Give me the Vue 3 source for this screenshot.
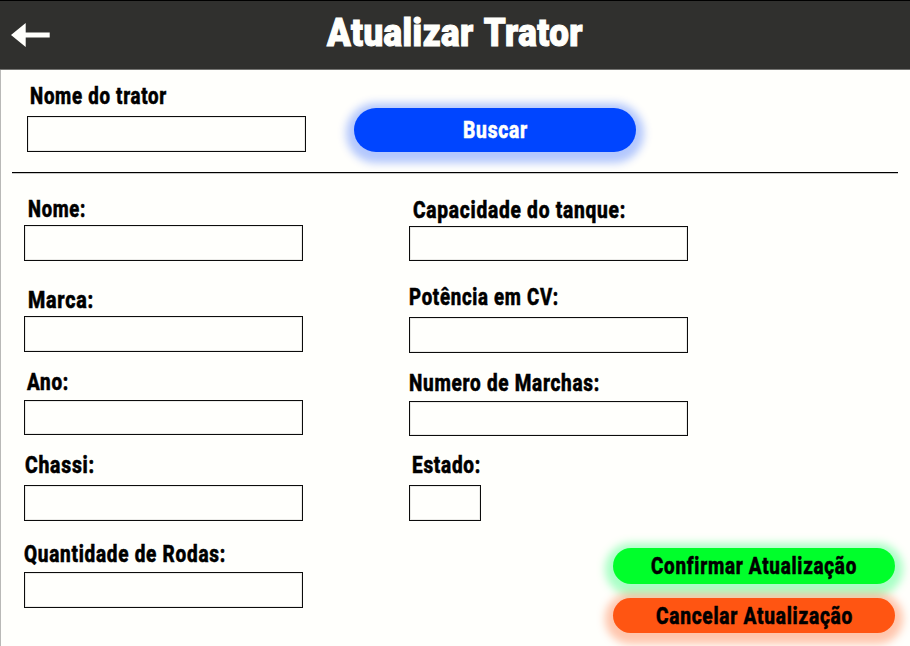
<script setup>
import { h } from 'vue'

// Text set to a fixed measure: condensed or stretched to `w` pixels.
const FitText = (props) =>
  h('svg', { class: 'fit', width: props.w, height: 26, 'aria-label': props.text }, [
    h('text', { x: 0, y: props.y || 20, textLength: props.w, lengthAdjust: 'spacingAndGlyphs' }, props.text),
  ])
FitText.props = ['text', 'w', 'y']

const leftFields = [
  { id: 'nome', label: 'Nome:', w: 58 },
  { id: 'marca', label: 'Marca:', w: 66 },
  { id: 'ano', label: 'Ano:', w: 42 },
  { id: 'chassi', label: 'Chassi:', w: 70 },
  { id: 'rodas', label: 'Quantidade de Rodas:', w: 202 },
]
const rightFields = [
  { id: 'tanque', label: 'Capacidade do tanque:', w: 213 },
  { id: 'potencia', label: 'Potência em CV:', w: 150 },
  { id: 'marchas', label: 'Numero de Marchas:', w: 191 },
  { id: 'estado', label: 'Estado:', w: 69 },
]
</script>

<template>
  <div class="page">
    <header class="header">
      <svg class="back" width="40" height="26" viewBox="0 0 40 26">
        <path d="M0 13 L14.7 1 V10.5 H38.7 V15.5 H14.7 V25 Z" fill="#fffffc" />
      </svg>
      <h1 class="title"><FitText text="Atualizar Trator" :w="256" :y="26" /></h1>
    </header>

    <section class="search">
      <div class="field busca">
        <label for="busca"><FitText text="Nome do trator" :w="137" /></label>
        <input id="busca" type="text" />
      </div>
      <button class="btn blue"><FitText text="Buscar" :w="65" /></button>
    </section>

    <main class="form">
      <div class="column">
        <div v-for="f in leftFields" :key="f.id" class="field" :class="f.id">
          <label :for="f.id"><FitText :text="f.label" :w="f.w" /></label>
          <input :id="f.id" type="text" />
        </div>
      </div>
      <div class="column">
        <div v-for="f in rightFields" :key="f.id" class="field" :class="f.id">
          <label :for="f.id"><FitText :text="f.label" :w="f.w" /></label>
          <input :id="f.id" type="text" />
        </div>
      </div>
      <div class="actions">
        <button class="btn green"><FitText text="Confirmar Atualização" :w="206" /></button>
        <button class="btn orange"><FitText text="Cancelar Atualização" :w="197" /></button>
      </div>
    </main>
  </div>
</template>

<style>
body { margin: 0; }
.fit {
  display: block;
  overflow: visible;
  fill: currentColor;
  stroke: currentColor;
  stroke-width: 0.5px;
  font-family: Roboto, "Liberation Sans", sans-serif;
  font-size: 23.5px;
  font-weight: 800;
  letter-spacing: 0.9px;
}
.title .fit {
  font-size: 38px;
  font-weight: 900;
  stroke-width: 1.1px;
  letter-spacing: 0.5px;
  word-spacing: 2px;
}
</style>

<style scoped>
.page {
  box-sizing: border-box;
  width: 910px;
  height: 646px;
  overflow: hidden;
  padding-left: 1px;
  background: linear-gradient(90deg, #b9b9b7 1px, #fffffc 1px);
  color: #000;
}
.header {
  box-sizing: border-box;
  height: 70px;
  margin-left: -1px;
  padding-left: 11px;
  display: flex;
  align-items: flex-start;
  background: #30302e;
  border-top: 1px solid #000;
  border-bottom: 1px solid #747472;
  color: #fffffc;
}
.back { margin-top: 21px; }
.title { margin: 19px 0 0 276px; }
.search {
  box-sizing: border-box;
  height: 103px;
  margin: 0 12px 0 11px;
  padding: 14px 0 0 15px;
  display: flex;
  align-items: flex-start;
  border-bottom: 1px solid #000;
  box-shadow: 0 1px 0 #c8c8c6;
}
.field { display: flex; flex-direction: column; }
.field label { display: block; height: 26px; }
.field input {
  box-sizing: border-box;
  width: 279px;
  height: 36px;
  margin: 0;
  padding: 0 8px;
  border: 1px solid #0c0c0c;
  border-radius: 0;
  outline: none;
  background: transparent;
  box-shadow: inset 0 0 0 1px rgba(0, 0, 0, 0.08);
  font: 18px Roboto, sans-serif;
}
.busca label { padding-left: 3px; }
.busca input { margin-top: 6px; }
.btn {
  box-sizing: border-box;
  width: 282px;
  height: 36px;
  padding: 0;
  border: 0;
  border-radius: 23px;
  display: flex;
  justify-content: center;
  align-items: flex-start;
  color: #000;
}
.blue {
  height: 44.5px;
  margin: 23.5px 0 0 48px;
  padding-top: 10.5px;
  background: #0045ff;
  color: #fffffc;
  box-shadow: 0 3px 8px 8px rgba(0, 69, 255, 0.3);
}
.form {
  display: flex;
  align-items: flex-start;
  height: 473px;
  padding-left: 23px;
}
.column { width: 385px; flex: none; padding-top: 24px; }
.column + .column { width: 204px; padding-top: 25px; }
.nome label, .marca label { padding-left: 4px; }
.ano label { padding-left: 3px; }
.chassi label { padding-left: 1px; }
.nome input, .marca input, .tanque input { margin-top: 2px; }
.ano input, .rodas input, .marchas input { margin-top: 4px; }
.chassi input, .potencia input, .estado input { margin-top: 6px; }
.ano input, .tanque input, .marchas input { height: 35px; }
.marca { margin-top: 27px; }
.ano, .marchas, .chassi { margin-top: 18px; }
.potencia { margin-top: 24px; }
.estado { margin-top: 17px; }
.rodas { margin-top: 21px; }
.tanque label { padding-left: 4px; }
.estado label { padding-left: 3px; }
.estado input { width: 72px; }
.actions {
  display: flex;
  flex-direction: column;
  gap: 14px;
  padding-top: 375px;
}
.actions .btn { padding-top: 6px; }
.green {
  background: #00ff2b;
  box-shadow: 0 3px 8px 8px rgba(0, 255, 90, 0.34);
}
.actions .orange {
  height: 35px;
  padding-top: 5.5px;
  background: #ff5512;
  box-shadow: 0 3px 8px 8px rgba(255, 85, 18, 0.34);
}
</style>
